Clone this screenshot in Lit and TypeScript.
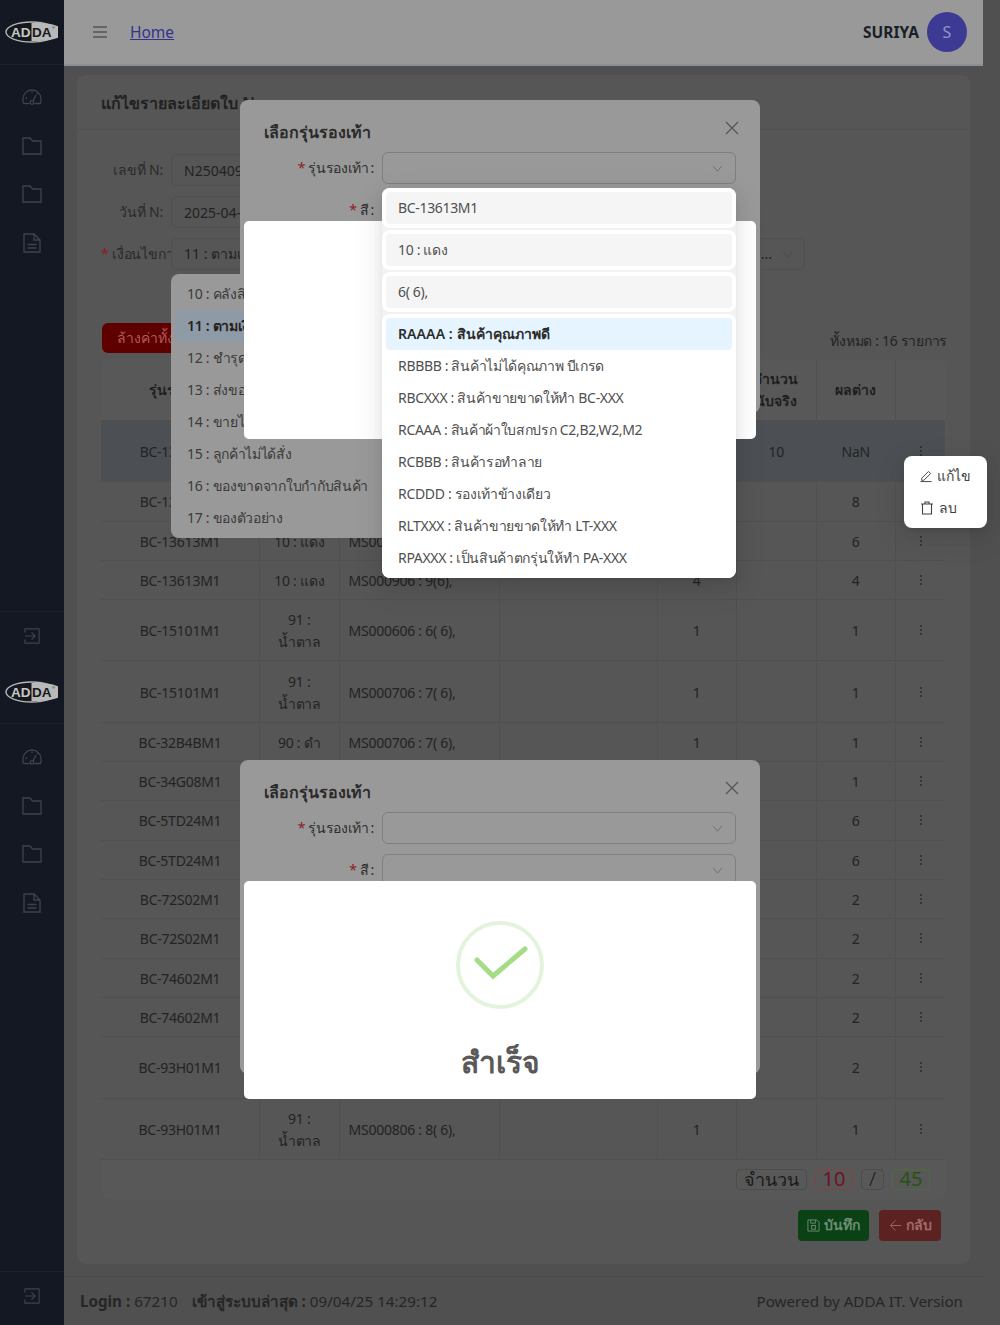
import {LitElement, html, css, svg} from 'lit';
import {customElement} from 'lit/decorators.js';

interface Row {
  code: string;
  color: string;
  size: string;
  qty: string;
  real: string;
  diff: string;
  tall?: boolean;
  active?: boolean;
}

const NAM_TAN = '91 : น้ำตาล';

const rows: Row[] = [
  {code: 'BC-13613M1', color: '10 : แดง', size: 'MS000606 : 6( 6),', qty: '1', real: '10', diff: 'NaN', tall: true, active: true},
  {code: 'BC-13613M1', color: '10 : แดง', size: 'MS000706 : 7( 6),', qty: '8', real: '', diff: '8'},
  {code: 'BC-13613M1', color: '10 : แดง', size: 'MS000806 : 8( 6),', qty: '6', real: '', diff: '6'},
  {code: 'BC-13613M1', color: '10 : แดง', size: 'MS000906 : 9(6),', qty: '4', real: '', diff: '4'},
  {code: 'BC-15101M1', color: NAM_TAN, size: 'MS000606 : 6( 6),', qty: '1', real: '', diff: '1', tall: true},
  {code: 'BC-15101M1', color: NAM_TAN, size: 'MS000706 : 7( 6),', qty: '1', real: '', diff: '1', tall: true},
  {code: 'BC-32B4BM1', color: '90 : ดำ', size: 'MS000706 : 7( 6),', qty: '1', real: '', diff: '1'},
  {code: 'BC-34G08M1', color: '90 : ดำ', size: 'MS000706 : 7( 6),', qty: '1', real: '', diff: '1'},
  {code: 'BC-5TD24M1', color: '90 : ดำ', size: 'MS000606 : 6( 6),', qty: '6', real: '', diff: '6'},
  {code: 'BC-5TD24M1', color: '90 : ดำ', size: 'MS000706 : 7( 6),', qty: '6', real: '', diff: '6'},
  {code: 'BC-72S02M1', color: '90 : ดำ', size: 'MS000606 : 6( 6),', qty: '2', real: '', diff: '2'},
  {code: 'BC-72S02M1', color: '90 : ดำ', size: 'MS000706 : 7( 6),', qty: '2', real: '', diff: '2'},
  {code: 'BC-74602M1', color: '90 : ดำ', size: 'MS000606 : 6( 6),', qty: '2', real: '', diff: '2'},
  {code: 'BC-74602M1', color: '90 : ดำ', size: 'MS000706 : 7( 6),', qty: '2', real: '', diff: '2'},
  {code: 'BC-93H01M1', color: NAM_TAN, size: 'MS000706 : 7( 6),', qty: '2', real: '', diff: '2', tall: true},
  {code: 'BC-93H01M1', color: NAM_TAN, size: 'MS000806 : 8( 6),', qty: '1', real: '', diff: '1', tall: true},
];

const reasons = [
  '10 : คลังสินค้า',
  '11 : ตามเงื่อนไข',
  '12 : ชำรุด',
  '13 : ส่งของผิด',
  '14 : ขายไม่ได้',
  '15 : ลูกค้าไม่ได้สั่ง',
  '16 : ของขาดจากใบกำกับสินค้า',
  '17 : ของตัวอย่าง',
];

const grades = [
  'RAAAA : สินค้าคุณภาพดี',
  'RBBBB : สินค้าไม่ได้คุณภาพ บีเกรด',
  'RBCXXX : สินค้าขายขาดให้ทำ BC-XXX',
  'RCAAA : สินค้าผ้าใบสกปรก C2,B2,W2,M2',
  'RCBBB : สินค้ารอทำลาย',
  'RCDDD : รองเท้าข้างเดียว',
  'RLTXXX : สินค้าขายขาดให้ทำ LT-XXX',
  'RPAXXX : เป็นสินค้าตกรุ่นให้ทำ PA-XXX',
];

const logo = () => html`<svg class="logo" viewBox="0 0 53 22" width="53" height="22">
  <ellipse cx="26.5" cy="11" rx="25.5" ry="10" fill="#15181d" stroke="#b5b5b5" stroke-width="1.4"></ellipse>
  <path d="M26.5 2 h8 a24 9 0 0 1 0 18 h-8 z" fill="#b9b9b9"></path>
  <text x="6" y="16" class="logo-a">AD</text>
  <text x="27" y="16" class="logo-b">DA</text>
  <text x="47" y="8" class="logo-r">®</text>
</svg>`;

const dashIcon = () => html`<svg class="side-ic dash" viewBox="0 0 20 18"><g fill="none" stroke="currentColor" stroke-width="1.3">
  <path d="M1.5 16.5 A9.2 9.2 0 0 1 1 12 A9 9 0 0 1 19 12 A9.2 9.2 0 0 1 18.5 16.5 H12.5"></path>
  <path d="M1.5 16.5 H7.5"></path>
  <circle cx="10" cy="15.5" r="1.8"></circle>
  <path d="M11 14 L14 8 M3.5 11 H5 M10 4.5 V6 M15 7 L16 6"></path>
</g></svg>`;

const folderIcon = () => html`<svg class="side-ic" viewBox="0 0 20 18"><path d="M1 1 H8 L10.5 4 H19 V17 H1 Z" fill="none" stroke="currentColor" stroke-width="1.3"></path></svg>`;

const docIcon = () => html`<svg class="side-ic doc" viewBox="0 0 18 20"><g fill="none" stroke="currentColor" stroke-width="1.3">
  <path d="M1 1 H11 L17 7 V19 H1 Z M11 1 V7 H17"></path><path d="M4.5 11.5 H13.5 M4.5 15 H13.5"></path>
</g></svg>`;

const exitIcon = () => html`<svg class="side-ic exit" viewBox="0 0 18 18"><g fill="none" stroke="currentColor" stroke-width="1.3">
  <path d="M1 5 V1 H17 V17 H1 V13"></path><path d="M1 9 H12 M8.5 5 L12.5 9 L8.5 13"></path>
</g></svg>`;

const chevron = () => html`<svg class="chev" viewBox="0 0 12 8" width="11" height="7"><path d="M1 1 L6 7 L11 1" fill="none" stroke="currentColor" stroke-width="1"></path></svg>`;

const closeIcon = () => svg`<path d="M1 1 L13 13 M13 1 L1 13" fill="none" stroke="currentColor" stroke-width="1.2"></path>`;

const dots = () => html`<svg class="dots" viewBox="0 0 4 14" width="4" height="14"><circle cx="2" cy="3" r="1"></circle><circle cx="2" cy="7" r="1"></circle><circle cx="2" cy="11" r="1"></circle></svg>`;

@customElement('app-root')
export class AppRoot extends LitElement {
  private sideMenu(extra = '') {
    return html`<nav class="menu ${extra}">
      <div class="menu-item">${dashIcon()}</div>
      <div class="menu-item">${folderIcon()}</div>
      <div class="menu-item">${folderIcon()}</div>
      <div class="menu-item">${docIcon()}</div>
    </nav>`;
  }

  private modal(extra: string) {
    return html`<section class="modal ${extra}">
      <h3>เลือกรุ่นรองเท้า</h3>
      <svg class="close" viewBox="0 0 14 14" width="14" height="14">${closeIcon()}</svg>
      <div class="m-row"><label><i>*</i> รุ่นรองเท้า<span class="colon">:</span></label><div class="m-select">${chevron()}</div></div>
      <div class="m-row"><label><i>*</i> สี<span class="colon">:</span></label><div class="m-select">${chevron()}</div></div>
    </section>`;
  }

  override render() {
    return html`
      <div class="page">
        <aside>
          <div class="side-logo">${logo()}</div>
          ${this.sideMenu()}
          <div class="side-trigger">${exitIcon()}</div>
          <div class="side-logo second">${logo()}</div>
          ${this.sideMenu('lower')}
          <div class="side-trigger last">${exitIcon()}</div>
        </aside>

        <div class="main">
          <header>
            <svg class="burger" viewBox="0 0 14 12" width="14" height="12"><path d="M0 1 H14 M0 6 H14 M0 11 H14" stroke="currentColor" stroke-width="1.2"></path></svg>
            <a class="home">Home</a>
            <span class="spacer"></span>
            <b class="user">SURIYA</b>
            <span class="avatar">S</span>
          </header>

          <main>
            <div class="card">
              <div class="card-head">แก้ไขรายละเอียดใบ N</div>
              <div class="card-body">
                <div class="f-row"><label>เลขที่ N:</label><div class="input">N250409001</div></div>
                <div class="f-row"><label>วันที่ N:</label><div class="input">2025-04-09</div></div>
                <div class="f-row"><label class="clip"><i>*</i> เงื่อนไขการคืน</label>
                  <div class="input wide">
                    <span class="val"><span>11 : ตามเงื่อนไขการรับคืน</span><span>(...</span></span>
                    ${chevron()}
                  </div>
                </div>

                <div class="tools">
                  <button class="clear">ล้างค่าทั้งหมด</button>
                  <span class="total">ทั้งหมด : 16 รายการ</span>
                </div>

                <div class="tbl">
                  <table>
                    <colgroup>
                      <col class="c-code"><col class="c-num"><col class="c-size"><col class="c-blank">
                      <col class="c-num"><col class="c-num"><col class="c-num"><col>
                    </colgroup>
                    <thead>
                      <tr>
                        <th>รุ่นรองเท้า</th><th>สี</th><th>ไซส์</th><th>หมายเหตุ</th>
                        <th>จำนวน</th><th>จำนวน<br>นับจริง</th><th>ผลต่าง</th><th></th>
                      </tr>
                    </thead>
                    <tbody>
                      ${rows.map(r => html`
                        <tr class="${r.tall ? 'tall' : ''} ${r.active ? 'active' : ''}">
                          <td>${r.code}</td><td>${r.color}</td><td class="left">${r.size}</td><td></td>
                          <td>${r.qty}</td><td>${r.real}</td><td>${r.diff}</td><td>${dots()}</td>
                        </tr>`)}
                    </tbody>
                  </table>
                  <div class="tbl-foot">
                    <span class="tag word">จำนวน</span>
                    <span class="tag red">10</span>
                    <span class="tag slash">/</span>
                    <span class="tag green">45</span>
                  </div>
                </div>

                <div class="actions">
                  <button class="save">
                    <svg viewBox="0 0 14 14" width="13" height="13"><g fill="none" stroke="currentColor" stroke-width="1"><path d="M1 1 H10.5 L13 3.5 V13 H1 Z M4 1 V4.5 H9 V1"></path><rect x="5" y="7" width="4" height="4"></rect></g></svg>
                    บันทึก
                  </button>
                  <button class="back">
                    <svg viewBox="0 0 14 14" width="13" height="13"><path d="M13 7 H1.5 M7 1.5 L1.5 7 L7 12.5" fill="none" stroke="currentColor" stroke-width="1"></path></svg>
                    กลับ
                  </button>
                </div>
              </div>
            </div>
          </main>

          <footer>
            <div class="login">
              <span><b>Login :</b> 67210</span>
              <span><b>เข้าสู่ระบบล่าสุด :</b> 09/04/25 14:29:12</span>
            </div>
            <span>Powered by ADDA IT. Version</span>
          </footer>
        </div>

        ${this.modal('m-top')}
        ${this.modal('m-bottom')}

        <div class="reason-menu">
          ${reasons.map((t, i) => html`<div class="reason ${i === 1 ? 'on' : ''}">${t}</div>`)}
        </div>

        <section class="swal s-top"></section>
        <section class="swal s-bottom">
          <svg class="tick" viewBox="0 0 88 88" width="88" height="88">
            <circle cx="44" cy="44" r="42" fill="none" stroke="#e4f4dc" stroke-width="4"></circle>
            <path d="M21 39 L37 55 L69 28" fill="none" stroke="#a5dc86" stroke-width="5" stroke-linecap="round"></path>
          </svg>
          <h2>สำเร็จ</h2>
        </section>

        <div class="drop-stack">
          <div class="drop"><div class="opt on-gray">BC-13613M1</div></div>
          <div class="drop"><div class="opt on-gray">10 : แดง</div></div>
          <div class="drop"><div class="opt on-gray">6( 6),</div></div>
          <div class="drop">
            ${grades.map((t, i) => html`<div class="opt ${i === 0 ? 'on-blue' : ''}">${t}</div>`)}
          </div>
        </div>

        <div class="row-menu">
          <div class="row-item">
            <svg viewBox="0 0 14 14" width="14" height="14"><path d="M2 9.5 L9.8 1.7 L12.3 4.2 L4.5 12 H2 Z M0.5 13.5 H13.5" fill="none" stroke="currentColor" stroke-width="1.1"></path></svg>
            แก้ไข
          </div>
          <div class="row-item">
            <svg viewBox="0 0 14 14" width="14" height="14"><path d="M1 3 H13 M5 3 V1 H9 V3 M2.5 3 V13 H11.5 V3" fill="none" stroke="currentColor" stroke-width="1.1"></path></svg>
            ลบ
          </div>
        </div>
      </div>
    `;
  }

  static override styles = css`
    :host {
      display: block;
      font-family: 'Noto Sans', 'Open Sans', sans-serif;
      font-size: 14px;
      line-height: 22px;
    }

    * {
      box-sizing: border-box;
    }

    i {
      font-style: normal;
      color: #8c1d1d;
    }

    .page {
      position: relative;
      display: flex;
      width: 1000px;
      height: 1325px;
      overflow: hidden;
      background: #505051;
    }

    aside {
      flex: 0 0 64px;
      display: flex;
      flex-direction: column;
      background: #131822;
      color: #3e434d;
    }

    .side-logo {
      flex: 0 0 65px;
      display: flex;
      align-items: center;
      justify-content: center;
      padding-right: 1px;
      border-bottom: 1px solid #1c222c;
    }

    .side-logo.second {
      flex-basis: 63px;
    }

    .logo-a,
    .logo-b {
      font: bold 13.5px 'Liberation Sans', sans-serif;
    }

    .logo-a {
      fill: #c8c8c8;
    }

    .logo-b {
      fill: #16181c;
    }

    .logo-r {
      font: 4px 'Liberation Sans', sans-serif;
      fill: #16181c;
    }

    .menu {
      flex: 0 0 546px;
      display: flex;
      flex-direction: column;
      padding-top: 8px;
    }

    .menu.lower {
      flex-basis: 547px;
      padding-top: 9px;
    }

    .menu-item {
      flex: 0 0 48.6px;
      display: flex;
      align-items: center;
      justify-content: center;
    }

    .side-ic {
      width: 20px;
      height: 18px;
    }

    .side-ic.dash {
      margin-top: -2px;
    }

    .side-ic.doc {
      height: 20px;
    }

    .side-ic.exit {
      width: 16px;
      height: 16px;
    }

    .side-trigger {
      flex: 0 0 50px;
      display: flex;
      align-items: center;
      justify-content: center;
      padding-bottom: 2px;
      border-top: 1px solid #1c222c;
    }

    .side-trigger.last {
      flex: 1;
      padding-bottom: 5px;
    }

    .main {
      flex: 0 0 919px;
      display: flex;
      flex-direction: column;
    }

    header {
      flex: 0 0 66px;
      display: flex;
      align-items: center;
      padding: 0 16px 0 29px;
      background: #999;
      border-bottom: 2px solid #8b8f96;
      color: #2a2a2a;
    }

    .burger {
      color: #333;
    }

    .home {
      margin-left: 23px;
      font-size: 15.5px;
      color: #33338f;
      text-decoration: underline;
    }

    .spacer {
      flex: 1;
    }

    .user {
      font-size: 15.5px;
      color: #1b1f27;
    }

    .avatar {
      margin-left: 8px;
      width: 40px;
      height: 40px;
      border-radius: 50%;
      display: flex;
      align-items: center;
      justify-content: center;
      font-size: 16px;
      background: #3d3a93;
      color: #9794c4;
    }

    main {
      flex: 0 0 1210px;
      padding: 9px 13px 0;
    }

    .card {
      height: 1189px;
      background: #565656;
      border-radius: 8px;
    }

    .card-head {
      height: 55px;
      padding: 17px 24px 0;
      font-size: 16px;
      font-weight: 600;
      color: #222;
      border-bottom: 1px solid #505050;
    }

    .card-body {
      padding: 24px 24px 0;
      color: #232323;
    }

    .f-row {
      display: flex;
      align-items: center;
      gap: 8px;
      height: 32px;
      margin-bottom: 10px;
    }

    .f-row label {
      flex: 0 0 62px;
      white-space: nowrap;
      overflow: hidden;
      text-align: right;
      letter-spacing: -0.2px;
      color: #2a2a2a;
    }

    .f-row label.clip {
      flex-basis: 70px;
      margin-right: -8px;
      text-align: left;
    }

    .input {
      width: 300px;
      height: 32px;
      padding: 5px 12px;
      border: 1px solid #505050;
      border-radius: 6px;
      background: #565656;
      color: #222;
    }

    .input.wide {
      width: 634px;
      display: flex;
      justify-content: space-between;
      align-items: center;
      padding-right: 11px;
    }

    .val {
      width: 588px;
      display: flex;
      justify-content: space-between;
    }

    .chev {
      color: #6c6c6c;
    }

    .input .chev {
      color: #484848;
    }

    .tools {
      display: flex;
      justify-content: space-between;
      align-items: center;
      margin-top: 53px;
      padding-left: 1px;
      margin-right: -1px;
      height: 30px;
    }

    .clear {
      width: 130px;
      height: 30px;
      padding: 0 0 0 15px;
      border: 0;
      border-radius: 6px;
      font: inherit;
      text-align: left;
      background: #5f0000;
      color: #b15a5a;
    }

    .total {
      position: relative;
      top: 3px;
      letter-spacing: -0.3px;
    }

    .tbl {
      margin-top: 6px;
      border-radius: 8px;
      overflow: hidden;
      background: #585858;
    }

    table {
      width: 844px;
      table-layout: fixed;
      border-collapse: separate;
      border-spacing: 0;
      background: #565656;
    }

    .c-code {
      width: 159px;
    }

    .c-num {
      width: 79.5px;
    }

    .c-size {
      width: 160px;
    }

    .c-blank {
      width: 158px;
    }

    th,
    td {
      padding: 0 8px;
      text-align: center;
      font-weight: 400;
      border-right: 1px solid #505050;
      border-bottom: 1px solid #505050;
    }

    th:last-child,
    td:last-child {
      border-right: 0;
    }

    th {
      height: 62px;
      font-weight: 700;
      color: #1f1f1f;
      background: #585858;
    }

    td {
      height: 39.35px;
      padding-top: 2px;
      letter-spacing: -0.25px;
    }

    tr.tall td {
      height: 61.2px;
    }

    tr.active td {
      background: #4c5055;
    }

    td.left {
      padding-left: 9px;
      text-align: left;
    }

    .dots {
      display: block;
      margin: -2px auto 0;
      fill: #2b2b2b;
    }

    .tbl-foot {
      height: 39px;
      display: flex;
      justify-content: flex-end;
      align-items: center;
      gap: 8px;
      padding-right: 16px;
      background: #585858;
    }

    .tag {
      width: 38px;
      height: 21px;
      display: flex;
      align-items: center;
      justify-content: center;
      font-size: 20px;
      border: 1px solid #4c4c4c;
      border-radius: 4px;
      color: #1a1a1a;
    }

    .tag.word {
      width: 71px;
      font-size: 18px;
    }

    .tag.slash {
      width: 23px;
      font-weight: 300;
    }

    .tag.red {
      color: #6f1226;
      border-color: #7d4646;
    }

    .tag.green {
      color: #2a5212;
      border-color: #4f6b40;
    }

    .actions {
      display: flex;
      justify-content: flex-end;
      gap: 10px;
      margin-top: 11px;
      padding-right: 5px;
    }

    .actions button {
      display: flex;
      align-items: center;
      justify-content: center;
      gap: 4px;
      height: 31px;
      border: 0;
      border-radius: 4px;
      font: inherit;
      font-weight: 600;
    }

    .save {
      width: 71px;
      background: #0a4216;
      color: #6d8c72;
    }

    .back {
      width: 62px;
      background: #5c2121;
      color: #a06a6a;
    }

    footer {
      flex: 1;
      display: flex;
      justify-content: space-between;
      align-items: center;
      padding: 0 20px 0 16px;
      border-top: 1px solid #4a4a4b;
      font-size: 15.2px;
      color: #262626;
    }

    .login {
      display: flex;
      gap: 14px;
    }

    .modal {
      position: absolute;
      left: 240px;
      width: 520px;
      padding: 20px 24px;
      background: #999;
      border-radius: 8px;
      color: #2e2e2e;
    }

    .m-top {
      top: 100px;
      height: 313px;
    }

    .m-bottom {
      top: 760px;
      height: 314px;
    }

    .modal h3 {
      margin: 0 0 8px;
      font-size: 16px;
      line-height: 24px;
      font-weight: 600;
      color: #2b2b2b;
    }

    .close {
      position: absolute;
      top: 21px;
      right: 21px;
      color: #555;
    }

    .m-row {
      display: flex;
      align-items: flex-start;
      gap: 7px;
      margin-bottom: 10px;
    }

    .m-row label {
      flex: 0 0 111px;
      height: 32px;
      padding-top: 5px;
      padding-right: 1px;
      text-align: right;
      white-space: nowrap;
      letter-spacing: -0.35px;
    }

    .colon {
      margin-left: 2px;
    }

    .m-select {
      flex: 1;
      height: 32px;
      padding-right: 12px;
      display: flex;
      align-items: center;
      justify-content: flex-end;
      border: 1px solid #7f7f7f;
      border-radius: 6px;
    }

    .reason-menu {
      position: absolute;
      left: 171px;
      top: 274px;
      width: 240px;
      height: 264px;
      padding: 4px;
      background: #999;
      border-radius: 8px;
      color: #3a3a3a;
    }

    .reason {
      height: 32px;
      padding: 5px 12px;
      white-space: nowrap;
      border-radius: 4px;
      letter-spacing: -0.3px;
    }

    .reason.on {
      background: #8f9aa7;
      color: #222;
      font-weight: 600;
    }

    .swal {
      position: absolute;
      left: 244px;
      width: 512px;
      height: 218px;
      padding-top: 40px;
      background: #fff;
      border-radius: 5px;
      text-align: center;
    }

    .s-top {
      top: 221px;
    }

    .s-bottom {
      top: 881px;
    }

    .tick {
      display: block;
      margin: 0 auto;
    }

    .swal h2 {
      margin: 33px 0 0;
      font-size: 30px;
      line-height: 40px;
      font-weight: 700;
      color: #595959;
    }

    .drop-stack {
      position: absolute;
      left: 382px;
      top: 188px;
      width: 354px;
      display: flex;
      flex-direction: column;
      gap: 2px;
      background: #f2f2f2;
      border-radius: 8px;
      color: #505050;
      box-shadow: 0 6px 16px rgba(0, 0, 0, 0.08), 0 3px 6px -4px rgba(0, 0, 0, 0.12), 0 9px 28px 8px rgba(0, 0, 0, 0.05);
    }

    .drop {
      padding: 4px;
      background: #fff;
      border-radius: 8px;
    }

    .opt {
      height: 32px;
      padding: 5px 12px;
      border-radius: 4px;
      white-space: nowrap;
      letter-spacing: -0.33px;
    }

    .on-gray {
      background: #f5f5f5;
    }

    .on-blue {
      background: #e6f4ff;
      color: #2c2c2c;
      font-weight: 600;
      letter-spacing: 0.1px;
    }

    .row-menu {
      position: absolute;
      left: 904px;
      top: 456px;
      width: 83px;
      height: 72px;
      padding: 4px 16px;
      background: #fff;
      border-radius: 8px;
      color: #404040;
      box-shadow: 0 6px 16px rgba(0, 0, 0, 0.08), 0 3px 6px -4px rgba(0, 0, 0, 0.12), 0 9px 28px 8px rgba(0, 0, 0, 0.05);
    }

    .row-item {
      height: 32px;
      display: flex;
      align-items: center;
      gap: 5px;
    }
  `;
}

declare global {
  interface HTMLElementTagNameMap {
    'app-root': AppRoot;
  }
}
